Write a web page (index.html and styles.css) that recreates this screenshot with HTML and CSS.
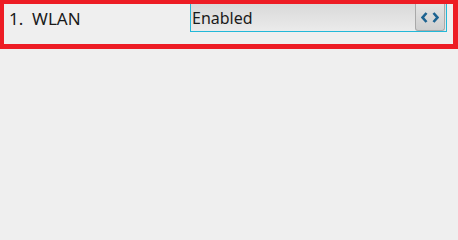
FILE: index.html
```html
<!DOCTYPE html>
<html>
<head>
<meta charset="utf-8">
<link rel="stylesheet" href="styles.css">
</head>
<body>
<div class="row">
  <div class="label">1.&nbsp;&nbsp;WLAN</div>
  <div class="select">
    <span class="value">Enabled</span>
    <span class="btn">
      <svg width="18" height="11" viewBox="0 0 18 11">
        <path d="M5.5 1 L1.6 5.5 L5.5 10" fill="none" stroke="#1d6391" stroke-width="2.6"/>
        <path d="M12.5 1 L16.4 5.5 L12.5 10" fill="none" stroke="#1d6391" stroke-width="2.6"/>
      </svg>
    </span>
  </div>
</div>
</body>
</html>
```
FILE: styles.css
```css
html, body {
  margin: 0;
  padding: 0;
  background: #efefef;
  width: 458px;
  height: 230px;
  overflow: hidden;
}
.row {
  box-sizing: border-box;
  width: 458px;
  height: 49px;
  border-style: solid;
  border-color: #ed1c24;
  border-width: 4px 5px 5px 4px;
  display: flex;
  align-items: flex-start;
  font-family: "Noto Sans", sans-serif;
  font-size: 16px;
  color: #1a1a1a;
}
.label {
  width: 186px;
  padding-left: 5px;
  box-sizing: border-box;
  line-height: 29px;
  font-size: 17px;
}
.select {
  box-sizing: border-box;
  width: 257px;
  height: 28px;
  border-left: 1px solid #22b8d8;
  border-bottom: 1px solid #22b8d8;
  border-right: 1px solid #22b8d8;
  background: linear-gradient(#d9d9d9, #ebebeb);
  display: flex;
  align-items: stretch;
  justify-content: space-between;
}
.value {
  padding-left: 1px;
  line-height: 28px;
}
.btn {
  box-sizing: border-box;
  width: 30px;
  height: 27px;
  border: 1px solid #a9a9a9;
  border-top: none;
  border-radius: 0 0 3px 3px;
  background: linear-gradient(#e4e4e4, #cfcfcf);
  display: flex;
  align-items: center;
  justify-content: center;
  margin-right: 1px;
}
.btn svg { display: block; }
```
